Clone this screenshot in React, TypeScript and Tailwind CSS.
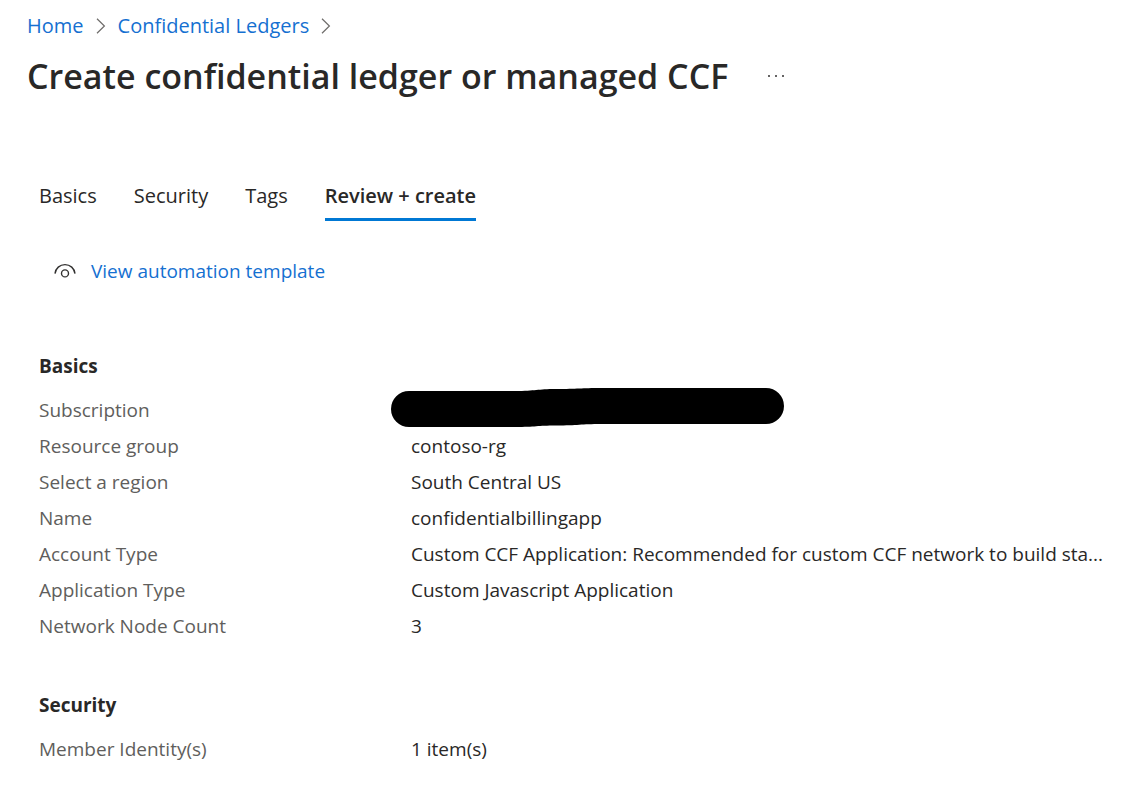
import type { ReactNode } from "react";

type Row = { label: string; value: ReactNode };

function Chevron() {
  return (
    <svg width="10" height="16" viewBox="0 0 10 16" fill="none" stroke="#6e6c6a" strokeWidth="1.2" aria-hidden="true">
      <path d="M1 0.8 8.4 8 1 15.2" />
    </svg>
  );
}

function EyeIcon() {
  return (
    <svg width="22" height="16" viewBox="0 0 22 16" fill="none" stroke="#323130" strokeWidth="1.4" aria-hidden="true">
      <path d="M1 10.6C1.6 5.3 5.8 1.6 11 1.6s9.400 3.700 10 9" />
      <circle cx="11" cy="10.400" r="3.500" />
    </svg>
  );
}

function Redaction() {
  return (
    <svg className="-ml-5 shrink-0" width="393" height="44" viewBox="0 0 393 44" role="img" aria-label="Redacted">
      <path d="M18 3H124C145 3 146 1 165 1C187 1 190 0 210 0H375A18 18 0 0 1 375 36H210C190 36 187 37.500 165 37.500C146 37.500 145 39 124 39H18A18 18 0 0 1 18 3Z" />
    </svg>
  );
}

const basics: Row[] = [
  { label: "Subscription", value: <Redaction /> },
  { label: "Resource group", value: "contoso-rg" },
  { label: "Select a region", value: "South Central US" },
  { label: "Name", value: "confidentialbillingapp" },
  { label: "Account Type", value: "Custom CCF Application: Recommended for custom CCF network to build sta..." },
  { label: "Application Type", value: "Custom Javascript Application" },
  { label: "Network Node Count", value: "3" },
];

const security: Row[] = [{ label: "Member Identity(s)", value: "1 item(s)" }];

const tabs = ["Basics", "Security", "Tags", "Review + create"];

function Section({ title, rows }: { title: string; rows: Row[] }) {
  return (
    <section>
      <h2 className="mb-3 text-[19px] leading-7 font-bold">{title}</h2>
      <dl>
        {rows.map((row) => (
          <div key={row.label} className="flex h-9 items-center">
            <dt className="w-[372px] shrink-0 text-[#605e5c]">{row.label}</dt>
            <dd className="flex items-center whitespace-nowrap">{row.value}</dd>
          </div>
        ))}
      </dl>
    </section>
  );
}

export default function App() {
  return (
    <div className="min-h-screen bg-white px-[27px] pt-3 pb-8 font-['Open_Sans','Noto_Sans',sans-serif] text-[19px] leading-7 text-[#292827]">
      <nav aria-label="Breadcrumb" className="flex items-center gap-3 text-xl leading-7 text-[#1570d1]">
        <a href="#home">Home</a>
        <Chevron />
        <a href="#ledgers">Confidential Ledgers</a>
        <Chevron />
      </nav>
      <header className="mt-3 flex items-center gap-9">
        <h1 className="text-[34px] leading-12 font-semibold">Create confidential ledger or managed CCF</h1>
        <button type="button" aria-label="More options" className="flex h-8 w-6 items-center justify-center">
          <svg width="18" height="4" viewBox="0 0 18 4" fill="#323130" aria-hidden="true">
            <circle cx="2" cy="2" r="1" />
            <circle cx="9" cy="2" r="1" />
            <circle cx="16" cy="2" r="1" />
          </svg>
        </button>
      </header>
      <main className="px-3">
        <div role="tablist" className="mt-[82px] flex gap-[37px] text-xl leading-7">
          {tabs.map((tab) => {
            const active = tab === "Review + create";
            return (
              <button
                key={tab}
                type="button"
                role="tab"
                aria-selected={active}
                className={
                  active
                    ? "border-b-3 border-[#0078d4] pb-2 font-semibold"
                    : "border-b-3 border-transparent pb-2"
                }
              >
                {tab}
              </button>
            );
          })}
        </div>
        <a href="#template" className="mt-9 ml-[15px] inline-flex items-center gap-[15px] text-[#1570d1]">
          <EyeIcon />
          View automation template
        </a>
        <div className="mt-[66px] flex flex-col gap-[47px]">
          <Section title="Basics" rows={basics} />
          <Section title="Security" rows={security} />
        </div>
      </main>
    </div>
  );
}
